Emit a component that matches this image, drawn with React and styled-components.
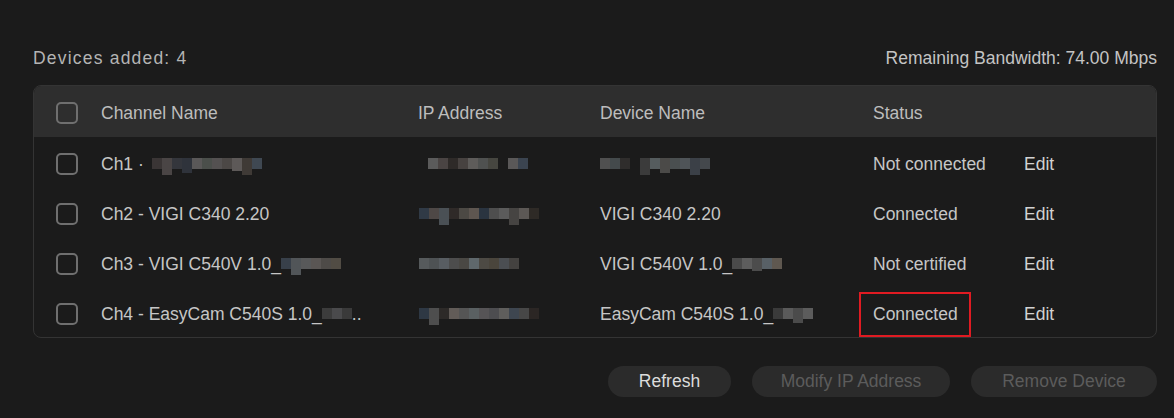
import React from 'react';
import styled, { createGlobalStyle } from 'styled-components';

const GlobalStyle = createGlobalStyle`
  html, body {
    margin: 0;
    padding: 0;
    background: #1b1b1b;
  }
  body {
    font-family: "Liberation Sans", Arial, sans-serif;
    font-size: 17.5px;
    color: #c4c4c4;
  }
`;

const Page = styled.div`
  width: 1174px;
  height: 418px;
  box-sizing: border-box;
  padding: 46px 17px 0 33px;
  background: #1b1b1b;
`;

const TopBar = styled.div`
  display: flex;
  justify-content: space-between;
  align-items: center;
  height: 24px;
  margin-bottom: 15px;
`;

const Count = styled.span`
  color: #b4b4b4;
  letter-spacing: 1.2px;
`;

const Bandwidth = styled.span`
  color: #c4c4c4;
`;

const Table = styled.div`
  border: 1px solid #343434;
  border-radius: 8px;
  overflow: hidden;
  background: #1b1b1b;
`;

const Row = styled.div`
  display: grid;
  grid-template-columns: 45px 317px 182px 273px 151px 1fr;
  align-items: center;
  box-sizing: border-box;
  height: ${p => (p.$head ? 51 : 50)}px;
  padding: 3px 0 0 22px;
  background: ${p => (p.$head ? '#2e2e2e' : 'transparent')};
  color: ${p => (p.$head ? '#bdbdbd' : '#c6c6c6')};
  line-height: 20px;
`;

const Cell = styled.div`
  display: flex;
  align-items: center;
  white-space: nowrap;
`;

const Box = styled.span`
  width: 18px;
  height: 18px;
  border: 2px solid #6f6f6f;
  border-radius: 5px;
  display: block;
`;

const EditLink = styled.span`
  color: #d2d2d2;
  cursor: pointer;
`;

const Marked = styled.span`
  position: relative;

  &::after {
    content: '';
    position: absolute;
    left: -14px;
    right: -13px;
    top: -12px;
    bottom: -13px;
    border: 2px solid #e01b22;
  }
`;

const Mosaic = styled.span`
  display: inline-flex;
  align-items: center;
  margin-left: ${p => p.$gap || 0}px;
  height: 16px;
`;

const Tile = styled.span`
  display: block;
  width: ${p => p.$w || 10}px;
  height: ${p => p.$h || 11}px;
  margin-top: ${p => p.$dy || 0}px;
`;

const Actions = styled.div`
  display: flex;
  justify-content: flex-end;
  gap: 21px;
  margin-top: 28px;
`;

const Button = styled.button`
  height: 31px;
  padding: 0;
  width: ${p => p.$w}px;
  border: none;
  border-radius: 16px;
  background: #2b2b2b;
  color: ${p => (p.disabled ? '#5c5c5c' : '#dcdcdc')};
  font-family: "Liberation Sans", Arial, sans-serif;
  font-size: 17.5px;
`;

const blur = colors => (
  colors.map((c, i) =>
    Array.isArray(c)
      ? <Tile key={i} style={{ background: c[0] }} $h={c[1]} $dy={c[2]} />
      : <Tile key={i} style={{ background: c }} />
  )
);

const Blur = ({ colors, gap }) => <Mosaic $gap={gap}>{blur(colors)}</Mosaic>;

const devices = [
  {
    channel: <>Ch1 ·<Blur gap={8} colors={['#3a3535', ['#4a4545', 17, 6], '#34363c', ['#2f333b', 15, 4], '#5a5858', '#4b4f4b', '#545151', '#4c4846', ['#5d5958', 13, 2], ['#3f3a36', 17, 6], '#3f4852']} /></>,
    ip: <Blur gap={10} colors={['#5b5b5b', '#4a4443', '#2e2a28', '#474240', '#5e5c5a', '#4f5150', '#464640', 'transparent', '#5a5858', '#3b4450']} />,
    device: <><Blur colors={['#505050', '#444a4c', '#2f2d2c']} /><Blur gap={10} colors={[['#3b3b3b', 17, 6], '#555c5e', ['#4b4a48', 15, 4], '#4a4f50', '#4f5458', ['#3b4047', 17, 6], '#44484c']} /></>,
    status: 'Not connected',
  },
  {
    channel: 'Ch2 - VIGI C340 2.20',
    ip: <Blur gap={1} colors={['#303a46', '#4e4846', ['#4a5055', 17, 6], '#2f2a28', '#4c4944', '#5e5650', '#2a3440', '#4e4e4e', '#5b5b5b', ['#464442', 17, 6], '#5c5855', '#2e2a26']} />,
    device: 'VIGI C340 2.20',
    status: 'Connected',
  },
  {
    channel: <>Ch3 - VIGI C540V 1.0_<Blur colors={['#38404a', ['#515558', 17, 6], '#58595a', '#5a5654', '#4e4b48', '#514c44']} /></>,
    ip: <Blur gap={1} colors={['#565a5c', '#4e5254', '#585d62', '#4d4d4d', '#4a4844', '#5f686c', '#4d4a44', '#4a453c', '#4b4e52', '#444240']} />,
    device: <>VIGI C540V 1.0_<Blur colors={['#4a4a4a', '#5d5d5d', ['#4c4c4c', 13, 2], '#586066', '#5f5850']} /></>,
    status: 'Not certified',
  },
  {
    channel: <>Ch4 - EasyCam C540S 1.0_<Blur colors={['#3c3c3c', '#4a4a4c', '#3a3a3a']} />..</>,
    ip: <Blur gap={1} colors={['#2e3844', ['#4e4e4e', 17, 6], '#2d2a28', '#625c58', '#555555', '#5a6062', '#565456', '#4d4d50', '#5f5e5c', '#3e4650', '#474747', '#2b2624']} />,
    device: <>EasyCam C540S 1.0_<Blur colors={['#3a3a3a', '#5a5a5a', ['#4b4b4b', 15, 4], '#5c5c5c']} /></>,
    status: 'Connected',
    marked: true,
  },
];

const App = () => {
  return (
    <Page>
      <GlobalStyle />
      <TopBar>
        <Count>Devices added: 4</Count>
        <Bandwidth>Remaining Bandwidth: 74.00 Mbps</Bandwidth>
      </TopBar>

      <Table>
        <Row $head>
          <Cell><Box /></Cell>
          <Cell>Channel Name</Cell>
          <Cell>IP Address</Cell>
          <Cell>Device Name</Cell>
          <Cell>Status</Cell>
          <Cell />
        </Row>
        {devices.map((d, i) => (
          <Row key={i}>
            <Cell><Box /></Cell>
            <Cell>{d.channel}</Cell>
            <Cell>{d.ip}</Cell>
            <Cell>{d.device}</Cell>
            <Cell>{d.marked ? <Marked>{d.status}</Marked> : d.status}</Cell>
            <Cell><EditLink>Edit</EditLink></Cell>
          </Row>
        ))}
      </Table>

      <Actions>
        <Button $w={123}>Refresh</Button>
        <Button $w={198} disabled>Modify IP Address</Button>
        <Button $w={186} disabled>Remove Device</Button>
      </Actions>
    </Page>
  );
};

export default App;
